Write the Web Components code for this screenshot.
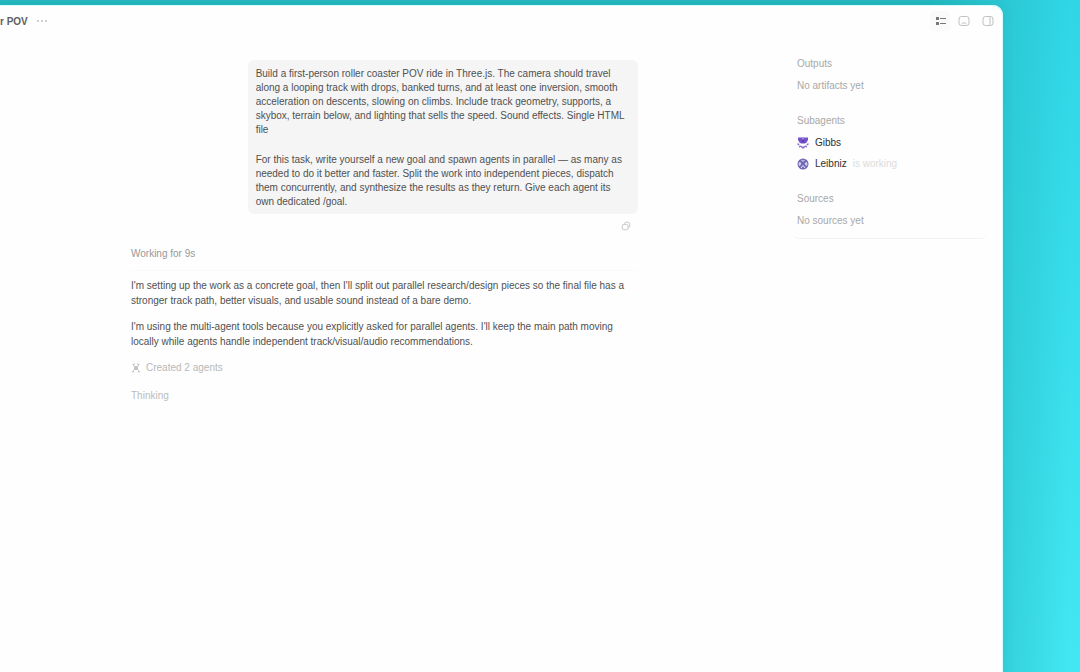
<!DOCTYPE html>
<html lang="en">
  <head>
    <meta charset="UTF-8" />
    <meta name="viewport" content="width=device-width, initial-scale=1.0" />
    <title>Roller coaster POV</title>
    <style>
      * {
        box-sizing: border-box;
      }

      body {
        margin: 0;
        font-family: "Liberation Sans", Arial, sans-serif;
        font-size: 10px;
        line-height: 15px;
        color: #505050;
      }
    </style>
  </head>
  <body>
    <app-desktop>
      <app-window>
        <title-bar slot="header" heading="r POV"></title-bar>
        <chat-thread>
          <user-message>
            <p>
              Build a first-person roller coaster POV ride in Three.js. The camera should travel along a
              looping track with drops, banked turns, and at least one inversion, smooth acceleration on
              descents, slowing on climbs. Include track geometry, supports, a skybox, terrain below, and
              lighting that sells the speed. Sound effects. Single HTML file
            </p>
            <p>
              For this task, write yourself a new goal and spawn agents in parallel — as many as needed to
              do it better and faster. Split the work into independent pieces, dispatch them concurrently,
              and synthesize the results as they return. Give each agent its own dedicated /goal.
            </p>
          </user-message>
          <agent-reply status="Working for 9s">
            <p>
              I'm setting up the work as a concrete goal, then I'll split out parallel research/design
              pieces so the final file has a stronger track path, better visuals, and usable sound instead
              of a bare demo.
            </p>
            <p>
              I'm using the multi-agent tools because you explicitly asked for parallel agents. I'll keep
              the main path moving locally while agents handle independent track/visual/audio
              recommendations.
            </p>
            <span slot="event">Created 2 agents</span>
            <span slot="progress">Thinking</span>
          </agent-reply>
        </chat-thread>
        <side-panel slot="aside">
          <panel-section heading="Outputs">No artifacts yet</panel-section>
          <panel-section heading="Subagents">
            <sub-agent name="Gibbs" avatar="crest"></sub-agent>
            <sub-agent name="Leibniz" avatar="orb">is working</sub-agent>
          </panel-section>
          <panel-section heading="Sources">No sources yet</panel-section>
        </side-panel>
      </app-window>
    </app-desktop>

    <script>
      (function () {
        /**
         * Registers an element that renders the given markup in its shadow root.
         *
         * @param {string} name
         * @param {(el: HTMLElement) => string} render
         */
        function define(name, render) {
          customElements.define(
            name,
            class extends HTMLElement {
              connectedCallback() {
                if (this.shadowRoot) return;
                const shadow = this.attachShadow({ mode: "open" });
                shadow.innerHTML = "<style>* { box-sizing: border-box; }</style>" + render(this);
              }
            }
          );
        }

        const avatars = {
          crest: `
            <svg viewBox="0 0 12 12" width="12" height="12" aria-hidden="true">
              <path d="M1 .5h10v2.500L9.500 5.500 8 6.500H4L2.500 5.500 1 3z" fill="#7652c8" />
              <path d="M4 .5h4L6 2.500z" fill="#a88be6" />
              <path d="M4.500 4 6 3l1.500 1L6 5.500z" fill="#5a36ad" />
              <path d="M.5 6 2.500 7l-.5 1.500L.5 8zM11.500 6 9.500 7l.5 1.500 1.500-.5z" fill="#8e70d5" />
              <path d="M2 9l2-.5 1 1h2l1-1 2 .5v1.500l-2-.5-1 1.500H5L4 10l-2 .5z" fill="#8d6bd4" />
            </svg>`,
          orb: `
            <svg viewBox="0 0 12 12" width="12" height="12" aria-hidden="true">
              <circle cx="6" cy="6" r="5.500" fill="#7168b2" />
              <path d="M3.500 1.500 6 4l2.500-2.500L6 2.500z" fill="#d8d2f3" />
              <path d="M2 4l2.500 1L3 8 1.500 7zM10 4 7.500 5 9 8l1.500-1z" fill="#d8d2f3" />
              <path d="M4 10l2-2.500L8 10" fill="none" stroke="#eeeafd" />
            </svg>`,
        };

        define("app-desktop", () => `
          <style>
            :host {
              display: block;
              min-height: 100vh;
              padding: 5px 77px 0 0;
              background:
                linear-gradient(90deg, #24b8bf 86%, rgba(36, 184, 191, 0) 99%),
                linear-gradient(#30d6e6, #42e7f3);
            }
          </style>
          <slot></slot>`);

        define("app-window", () => `
          <style>
            :host {
              display: flex;
              flex-direction: column;
              min-height: calc(100vh - 5px);
              background: #fefefe;
              border-radius: 0 10px 0 0;
              box-shadow: inset -1px 1px #d8fbfc, 0 0 12px rgba(0, 110, 120, 0.1);
            }
            .content {
              display: grid;
              grid-template-columns: minmax(0, 1fr) 194px;
              align-items: start;
              padding: 10px 16px 0 0;
            }
          </style>
          <slot name="header"></slot>
          <div class="content">
            <main><slot></slot></main>
            <slot name="aside"></slot>
          </div>`);

        define("title-bar", (el) => `
          <style>
            :host {
              display: block;
            }
            header {
              display: flex;
              align-items: center;
              height: 32px;
              padding-right: 5px;
            }
            h1 {
              margin: 0;
              font-size: 10px;
              font-weight: 700;
              color: #606060;
            }
            button {
              display: grid;
              place-items: center;
              width: 20px;
              height: 20px;
              padding: 0;
              border: 0;
              border-radius: 4px;
              background: none;
              color: #c0c0c0;
            }
            h1 + button {
              margin-left: 4px;
            }
            nav {
              display: flex;
              gap: 4px;
              margin-left: auto;
            }
            nav button:first-child {
              background: #fafafa;
              color: #777;
            }
          </style>
          <header>
            <h1>${el.getAttribute("heading")}</h1>
            <button type="button" aria-label="More">
              <svg viewBox="0 0 12 12" width="12" height="12" fill="currentColor">
                <circle cx="2" cy="6" r="1" /><circle cx="6" cy="6" r="1" /><circle cx="10" cy="6" r="1" />
              </svg>
            </button>
            <nav>
              <button type="button" aria-label="Summary">
                <svg viewBox="0 0 12 12" width="12" height="12" fill="currentColor">
                  <path d="M2 2h3v3H2zM2 7h3v3H2z" />
                  <path d="M6 3h6v1H6zM6 8h6v1H6z" />
                </svg>
              </button>
              <button type="button" aria-label="Terminal">
                <svg viewBox="0 0 12 12" width="12" height="12" fill="none" stroke="currentColor">
                  <rect x="1" y="1.500" width="10" height="9" rx="2.500" />
                  <path d="M3.500 9c.5-1.500 4.500-1.500 5 0" />
                </svg>
              </button>
              <button type="button" aria-label="Side panel">
                <svg viewBox="0 0 12 12" width="12" height="12" fill="none" stroke="currentColor">
                  <rect x="1" y="1.500" width="10" height="9" rx="2.500" />
                  <path d="M8 2v8" />
                </svg>
              </button>
            </nav>
          </header>`);

        define("chat-thread", () => `
          <style>
            :host {
              display: block;
              width: 66%;
              max-width: 507px;
              margin: 13px auto 0 131px;
            }
          </style>
          <slot></slot>`);

        define("user-message", () => `
          <style>
            :host {
              display: flex;
              flex-direction: column;
              align-items: flex-end;
            }
            .bubble {
              width: 77%;
              padding: 7px 8px 5px;
              border-radius: 6px;
              background: #f5f5f5;
              line-height: 14px;
            }
            ::slotted(p) {
              margin: 0 0 16px;
            }
            ::slotted(p:last-child) {
              margin: 0;
            }
            button {
              display: grid;
              place-items: center;
              width: 24px;
              height: 24px;
              padding: 0;
              border: 0;
              background: none;
              color: #bcbcbc;
            }
          </style>
          <div class="bubble"><slot></slot></div>
          <button type="button" aria-label="Copy">
            <svg viewBox="0 0 12 12" width="10" height="10" fill="none" stroke="currentColor">
              <rect x="1.500" y="4" width="7" height="6.500" rx="2" />
              <path d="M4 3.500c0-1 .7-2 2-2h2.500c1.300 0 2 .8 2 2v2.500c0 1-.8 2-2 2" />
            </svg>
          </button>`);

        define("agent-reply", (el) => `
          <style>
            :host {
              display: block;
            }
            .status {
              padding: 8px 0 9px;
              border-bottom: 1px solid #fafafa;
              margin-bottom: 7px;
              color: #989898;
            }
            ::slotted(p) {
              margin: 0 0 11px;
            }
            .event {
              display: flex;
              align-items: center;
              gap: 5px;
              margin-bottom: 13px;
              color: #b8b8b8;
            }
            .progress {
              color: #bcbcbc;
            }
          </style>
          <div class="status">${el.getAttribute("status")}</div>
          <slot></slot>
          <div class="event">
            <svg viewBox="0 0 12 12" width="10" height="10" fill="none" stroke="currentColor" aria-hidden="true">
              <path d="M2 1.500h3M7 1.500h3M2 2l8 8M10 2l-8 8M1 10.500h3M8 10.500h3" />
              <circle cx="6" cy="6" r="2" />
            </svg>
            <slot name="event"></slot>
          </div>
          <div class="progress"><slot name="progress"></slot></div>`);

        define("side-panel", () => `
          <style>
            :host {
              display: block;
            }
            aside {
              display: grid;
              gap: 20px;
              padding: 9px 4px 10px;
              border-bottom: 1px solid #f3f3f3;
              border-radius: 6px;
            }
          </style>
          <aside><slot></slot></aside>`);

        define("panel-section", (el) => `
          <style>
            :host {
              display: block;
              color: #a8a8a8;
            }
            h2 {
              margin: 0 0 7px;
              font-size: 10px;
              font-weight: 400;
            }
            .items {
              display: grid;
              gap: 6px;
            }
          </style>
          <h2>${el.getAttribute("heading")}</h2>
          <div class="items"><slot></slot></div>`);

        define("sub-agent", (el) => `
          <style>
            :host {
              display: flex;
              align-items: center;
              gap: 6px;
              color: #dcdcdc;
            }
            svg {
              display: block;
            }
            .name {
              color: #303030;
            }
          </style>
          ${avatars[el.getAttribute("avatar")]}
          <span class="name">${el.getAttribute("name")}</span>
          <slot></slot>`);
      })();
    </script>
  </body>
</html>
